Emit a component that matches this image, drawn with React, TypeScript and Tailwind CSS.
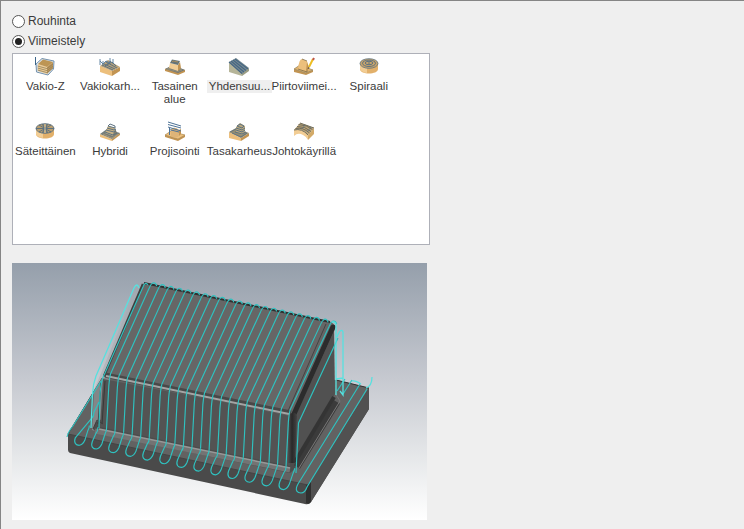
import type { ReactNode } from "react";

const WOOD = "#ecbf7c";
const LIGHT = "#f2cd94";
const DARK = "#c29452";
const STEEL = "#5d7280";

const icons: Record<string, ReactNode> = {
  constantZ: (
    <>
      <path d="M2 8 8 2.5 20 5 19.500 13 14 19 2.500 16Z" fill="#dce4ea" stroke="#7592ad" strokeWidth="1" />
      <path d="M4 8 13 11V18L4 15Z" fill={LIGHT} />
      <path d="M13 11 19 6V12L13 18Z" fill={DARK} />
      <path d="M4 8 9 3.500 19 6 13 11Z" fill="#bd9554" />
      <path d="M3.500 10 13 12.600 19 8M3.500 12 13 14.600 19 10M3.500 14 13 16.600 19 12" fill="none" stroke="#8c8060" strokeWidth=".8" />
      <path d="M1.500 1V9" stroke="#3c658a" />
    </>
  ),
  scallop: (
    <>
      <path d="M1 10 13 15V20L1 16Z" fill={WOOD} />
      <path d="M13 15 21 11V15L13 20Z" fill={DARK} />
      <path d="M1 10 9 4 21 11 13 15Z" fill="#b6a078" />
      <path d="M3 9 14 14M5 8 16 13M7 6 18 12M8 9 13 6 17 10M6 10 12 5" fill="none" stroke={STEEL} strokeWidth="1" />
      <path d="M1 3V9M4 5V9M11 2V7M14 3V8M1 5 4 8 7 5 11 7" fill="none" stroke="#557c9c" strokeWidth=".9" />
    </>
  ),
  flat: (
    <>
      <path d="M1 13 9 10 21 14V16L14 19 1 15Z" fill={DARK} />
      <path d="M1 13 9 9 21 14 14 17Z" fill="#71797a" />
      <path d="M3 13 9 11 18 14 14 15.500Z" fill="none" stroke="#a79874" strokeWidth=".6" />
      <path d="M6 7 14 9V15L5 12Z" fill={LIGHT} />
      <path d="M14 9 16 6 17 12 14 15Z" fill={DARK} />
      <path d="M6 7 8 3.500 16 5 14 9Z" fill="#667477" />
      <path d="M8 6 9 5 14 6" stroke={DARK} fill="none" strokeWidth=".7" />
    </>
  ),
  parallel: (
    <>
      <path d="M1 6 14 17V20L1 16Z" fill="#b6b599" />
      <path d="M14 17 21 12V15L14 20Z" fill="#9b9d84" />
      <path d="M1 6 8 2 21 12 14 18Z" fill="#788a90" />
      <path d="M1 6 14 17.500M3 5 16 16M5 4 18 14.500M7 3 20 13" stroke="#456684" strokeWidth="1.100" />
    </>
  ),
  pencil: (
    <>
      <path d="M1 13 7 9 20 14V16L13 19 1 16Z" fill={DARK} />
      <path d="M1 13 7 9 20 14 13 17Z" fill="#e1b16b" stroke="#8f8a6d" strokeWidth=".6" />
      <path d="M5 13Q6 3 9 3L14 5Q15 7 14 15Z" fill={WOOD} />
      <path d="M5 13 14 16V13M9 3 14 5" stroke="#806e4b" strokeWidth=".8" fill="none" />
      <path d="M14 6 16 11 13 15Z" fill={DARK} />
      <path d="M16 11 20 3" stroke="#edbd21" strokeWidth="2" />
      <path d="M20 4 21 2" stroke="#be5449" strokeWidth="2" />
      <path d="M15 13 16 11" stroke="#6b5130" />
    </>
  ),
  spiral: (
    <>
      <path d="M2 7V13C2 19 20 19 20 13V7Z" fill="#e2b06a" />
      <path d="M2 7V13Q3 16 9 17V10Z" fill={LIGHT} />
      <ellipse cx="11" cy="7.500" rx="9" ry="4.800" fill="#c8a46b" stroke={STEEL} strokeWidth=".8" />
      <ellipse cx="11" cy="7.300" rx="6.500" ry="3.200" fill="none" stroke={STEEL} />
      <ellipse cx="11" cy="7" rx="3.800" ry="1.700" fill="none" stroke={STEEL} />
      <path d="M10 7H12" stroke={STEEL} />
    </>
  ),
  radial: (
    <>
      <path d="M2 8V13C2 19 20 19 20 13V8Z" fill="#e2b06a" />
      <path d="M2 8V13Q3 16 9 17V10Z" fill={LIGHT} />
      <ellipse cx="11" cy="7.500" rx="9" ry="4.800" fill="#b99d6e" stroke={STEEL} strokeWidth=".9" />
      <path d="M2 7.500H20M5 4 17 11M17 4 5 11M8 3 14 12M14 3 8 12" stroke={STEEL} strokeWidth="1" />
      <path d="M11 3V12" stroke="#d2c29d" />
      <path d="M9.500 3V12M12.500 3V12" stroke={STEEL} strokeWidth=".7" />
    </>
  ),
  hybrid: (
    <>
      <path d="M1 13 13 18V20L1 16Z" fill={WOOD} />
      <path d="M13 18 21 12V14L13 20Z" fill={DARK} />
      <path d="M1 13 8 8 21 12 13 18Z" fill="#747d7b" />
      <path d="M6 12 9 5 16 7 14 15Z" fill="#c9b285" />
      <path d="M14 15 16 7 18 12Z" fill="#86806a" />
      <path d="M9 5 11 3 16 5 16 7ZM8 7 15 9 17 8M7 9 15 11 17 10M6 11 14 14 18 12" fill="none" stroke={STEEL} strokeWidth="1" />
      <path d="M4 13 13 17 19 13" fill="none" stroke="#b99d6e" strokeWidth=".7" />
    </>
  ),
  project: (
    <>
      <path d="M1 14 7 10 21 14V16L14 20 1 16Z" fill={DARK} />
      <path d="M1 14 7 10 21 14 14 18Z" fill={WOOD} stroke="#9e8558" strokeWidth=".5" />
      <path d="M7 15V8Q11 5 15 9V15Q11 18 7 15Z" fill="#deb478" />
      <path d="M15 9 17 8V13L15 15Z" fill={DARK} />
      <path d="M4 1 17 5M4 3.500 17 7M4 6 17 10M5 8.500 15 11M5.500 7V14" fill="none" stroke="#4e7397" strokeWidth="1" />
    </>
  ),
  equalScallop: (
    <>
      <path d="M1 11 13 17V20L1 17Z" fill={WOOD} />
      <path d="M13 17 21 12V15L13 20Z" fill={DARK} />
      <path d="M1 11 8 7 21 12 13 17Z" fill="#938d72" />
      <path d="M4 12 13 16 19 12M2 11 8 8" fill="none" stroke={STEEL} strokeWidth=".9" />
      <path d="M8 6V11L14 14 17 10V5L12 2Z" fill="#b9a77d" />
      <path d="M9 5 12 3 16 5 14 7ZM8 7 14 9 17 7M8 9 14 11 17 9M7 11 14 13 18 11" fill="none" stroke={STEEL} strokeWidth="1" />
    </>
  ),
  guide: (
    <>
      <path d="M1 9V15Q5 11 10 14Q14 16 15 19V14Q9 7 1 9Z" fill={LIGHT} />
      <path d="M15 14 21 7V13L15 19Z" fill="#d3aa68" />
      <path d="M1 9 7 2Q14 4 21 7L15 14Q9 7 1 9Z" fill="#bda477" />
      <path d="M1 9Q9 7 15 14M2.500 7.500Q10 6 16.500 12M4 5.500Q12 5 18 10.500M5.500 3.500Q14 4 19.500 8.500M7 2 21 7" fill="none" stroke="#706d5c" strokeWidth="1" />
      <path d="M9 8 12 4M14 11 18 6" stroke={STEEL} strokeWidth=".7" />
    </>
  ),
};

type Item = { icon: string; label: string; spacing: string; selected?: boolean };

const items: Item[] = [
  { icon: "constantZ", label: "Vakio-Z", spacing: "tracking-[0px]" },
  { icon: "scallop", label: "Vakiokarh...", spacing: "tracking-[0px]" },
  { icon: "flat", label: "Tasainen alue", spacing: "tracking-[0px]" },
  { icon: "parallel", label: "Yhdensuu...", spacing: "tracking-[0px]", selected: true },
  { icon: "pencil", label: "Piirtoviimei...", spacing: "tracking-[0px]" },
  { icon: "spiral", label: "Spiraali", spacing: "tracking-[0px]" },
  { icon: "radial", label: "Säteittäinen", spacing: "tracking-[0px]" },
  { icon: "hybrid", label: "Hybridi", spacing: "tracking-[0px]" },
  { icon: "project", label: "Projisointi", spacing: "tracking-[0px]" },
  { icon: "equalScallop", label: "Tasakarheus", spacing: "tracking-[0px]" },
  { icon: "guide", label: "Johtokäyrillä", spacing: "tracking-[0px]" },
];

function Radio({ label, checked = false }: { label: string; checked?: boolean }) {
  return (
    <label className="flex h-5 items-center gap-[3px] text-[12px] leading-5">
      <span className="flex size-[13px] items-center justify-center rounded-full border border-[#555] bg-white">
        {checked && <span className="size-[7px] rounded-full bg-[#222]" />}
      </span>
      <span>{label}</span>
    </label>
  );
}

function Strategy({ item }: { item: Item }) {
  return (
    <div className="flex flex-col items-center">
      <svg viewBox="0 0 22 21" className="h-[21px] w-[22px] shrink-0">{icons[item.icon]}</svg>
      <div
        className={`mt-[3px] px-[2px] text-center text-[11.5px] leading-[13px] ${item.spacing} ${
          item.selected ? "bg-[#efefef]" : ""
        } ${item.label.includes(" ") ? "w-[58px]" : "whitespace-nowrap"}`}
      >
        {item.label}
      </div>
    </div>
  );
}

/* Raster passes over the sloped top, down the front wall and out over the base. */
const upper = (j: number) => [109.5 + 8.55 * j, 378 + 1.72 * j];
const lower = (j: number) => [106.5 + 8.55 * j, 429 + 1.78 * j];
const crest = (j: number) => [153.7 + 8.57 * j, 284 + 1.82 * j];

function passPath(j: number) {
  const [ux, uy] = upper(j);
  const [lx, ly] = lower(j);
  const [cx, cy] = crest(j);
  return `M${cx + 3} ${cy + 2}Q${cx + 2} ${cy - 2} ${cx - 1} ${cy - 1}Q${cx - 3} ${cy} ${cx - 4.5} ${cy + 4}L${ux + 1} ${uy - 4}Q${ux} ${uy} ${ux - 0.7} ${uy + 8}L${lx} ${ly}`;
}

function loopPath(m: number) {
  const cx = 79.3 + 17.03 * m;
  const by = 445.3 + 3.69 * m;
  const [ax, ay] = m === 0 ? [94, 412] : lower(2 * m - 3);
  const [bx, by2] = lower(2 * m - 2);
  return `M${ax} ${ay}Q${ax} ${ay + 4} ${ax - 2} ${ay + 6}L${cx - 4} ${by - 7.5}C${cx - 6} ${by - 2} ${cx - 3} ${by} ${cx} ${by}Q${cx + 3.5} ${by - 0.5} ${cx + 5.5} ${by - 5}L${bx - 1.5} ${by2 + 5}Q${bx} ${by2 + 2} ${bx} ${by2}`;
}

function Preview() {
  const passes = Array.from({ length: 22 }, (_, j) => j);
  const loops = Array.from({ length: 13 }, (_, m) => m);
  return (
    <svg viewBox="12 263 415 257" className="h-[257px] w-[415px]">
      <defs>
        <linearGradient id="sky" x1="0" y1="0" x2="0" y2="1">
          <stop offset="0" stopColor="#959fab" />
          <stop offset=".45" stopColor="#c6c9d0" />
          <stop offset=".75" stopColor="#e5e7e9" />
          <stop offset="1" stopColor="#ffffff" />
        </linearGradient>
        <linearGradient id="corner" x1="0" y1="0" x2="1" y2="0">
          <stop offset="0" stopColor="#585858" />
          <stop offset=".5" stopColor="#292929" />
          <stop offset="1" stopColor="#444" />
        </linearGradient>
      </defs>
      <rect x="12" y="263" width="415" height="257" fill="url(#sky)" />
      <path d="M68 434 102 378 336 380 369 388V409L311 502Q309 505 305 504L70 453Q68 452 68 450Z" fill="#4a4a4a" />
      <path d="M68 434 102 378 336 380 369 388 308 485Z" fill="#626262" />
      <path d="M308 485 369 388V409L311 502Z" fill="#515151" />
      <path d="M306 485 311 482V502Q309 505 306 503Z" fill="#303030" />
      <path d="M68 434 308 485" stroke="#444" />
      <path d="M68 434 102 378M336 380 369 388" stroke="#333" fill="none" />
      <path d="M144 283 136 289 94 390 92 430 102 434 110 376Z" fill="#a5a9ae" opacity=".5" />
      <path d="M93 429 96 422 102 419 296 461 297 467 290 473 97 433Z" fill="#4c4c4c" />
      <path d="M95 431 290 470" stroke="#737373" strokeWidth="5" />
      <path d="M99 429 290 468" stroke="#979797" strokeWidth="1.500" />
      <path d="M297 467 337 402" stroke="#3b3b3b" strokeWidth="7" />
      <path d="M299 468 340 401 335 393" stroke="#777" strokeWidth="1" fill="none" />
      <path d="M103 379 292 415 290 466 100 427Z" fill="#535353" />
      <path d="M292 414 334 327 335 394 295 461Z" fill="#515151" />
      <path d="M144 283 330 322Q335 323 335 329L295 417 104 377Z" fill="#666" />
      <path d="M144 283 330 322" stroke="#303030" strokeWidth="2" />
      <path d="M143 284 104 376" stroke="#3f3f3f" strokeWidth="2.500" />
      <path d="M105 375 291 413" stroke="#484848" strokeWidth="5" />
      <path d="M106 376 289 414" stroke="#a4a4a4" strokeWidth="2" />
      <path d="M333 327 294 414" stroke="#2c2c2c" strokeWidth="5" strokeLinecap="round" />
      <path d="M326 324 288 411" stroke="#444" strokeWidth="1" />
      <path d="M289 415Q295 410 297 416L295 463 287 463Z" fill="url(#corner)" />
      <path d="M295 462 334 397" stroke="#343434" strokeWidth="4" />
      <path d="M105 381 102 424M101 382 98 424" stroke="#393939" />
      <path d="M93 429 97 420 103 424" stroke="#404040" fill="none" />
      <g fill="none" stroke="#2fc2c0" strokeWidth="1.150">
        {passes.map((j) => <path key={j} d={passPath(j)} />)}
        {loops.map((m) => <path key={m} d={loopPath(m)} />)}
        <path d="M99 428 100 394Q101 380 105 373L143 287Q145 281 148 285" />
        <path d="M67 437Q68 432 73 426L101 381M94 412 99 402" />
        <path d="M296 473 298.500 423 338 338" />
        <path d="M360 384 298 484C294 491 298 493 301 493Q305 493 307 487L367 389" />
        <path d="M337 391 345 379M343 394 352 380" />
      </g>
      <g fill="none" stroke="#57e1df" strokeWidth="1.300">
        <path d="M91 428 92.500 394Q93 384 96 376L134 288Q137 282 139 288" />
        <path d="M332 322Q336 321 336 326V395M337 337Q341 327 343 332V395L340 391M336 379 343 378M352 381Q355 380 361 384M366 388Q372 386 372 377" />
      </g>
    </svg>
  );
}

export default function App() {
  return (
    <main className="h-[529px] w-[744px] border-t border-l border-[#858585] bg-[#efefef] pt-[10px] pl-[11px] font-['Liberation_Sans',Arial,sans-serif] text-[#3b3b3b]">
      <Radio label="Rouhinta" />
      <Radio label="Viimeistely" checked />
      <section className="mt-[2px] grid h-[192px] w-[418px] auto-rows-[65px] grid-cols-[repeat(6,64.7px)] border border-[#aeb0b8] bg-white pt-[2px]">
        {items.map((item) => <Strategy key={item.label} item={item} />)}
      </section>
      <div className="mt-[18px]">
        <Preview />
      </div>
    </main>
  );
}
